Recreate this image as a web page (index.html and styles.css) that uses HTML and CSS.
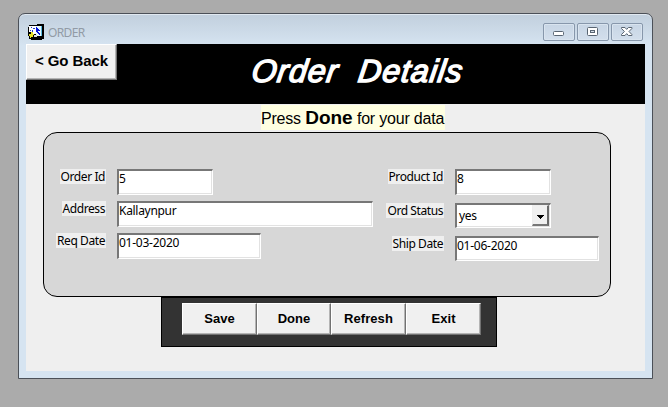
FILE: index.html
```html
<!DOCTYPE html>
<html lang="en">
<head>
<meta charset="utf-8">
<title>ORDER</title>
<link rel="stylesheet" href="styles.css">
</head>
<body>
<main class="window">
  <div class="titlebar">
    <svg class="app-icon" width="16" height="16" viewBox="0 0 16 16" shape-rendering="crispEdges">
      <path d="M1 1H9V0H16V15H14V16H3V15H1V12H0V3H1Z" fill="#000"/>
      <path d="M1 2H8V10H5V8H1Z" fill="#fff"/>
      <path d="M3 3H4V4H3ZM5 4H7V5H5ZM2 6H3V7H2ZM4 6H5V8H4Z" fill="#223bc8"/>
      <path d="M8 2H14V12H8Z" fill="#e6faff"/>
      <path d="M13 2H14V12H13Z" fill="#58b9df"/>
      <path d="M8 3H9V4H10V5H11V6H12V7H10V8H11V9H12V11H11V10H10V9H9V8H8Z" fill="#0713dd"/>
      <path d="M3 8H5V10H6V11H5V13H3V14H2V12H1V10H3Z" fill="#e8e329"/>
      <path d="M6 11H9V13H6Z" fill="#ddd"/>
    </svg>
    <span class="caption">ORDER</span>
    <div class="controls">
      <span class="control"><svg width="30" height="16" viewBox="0 0 30 16"><rect x="9.5" y="7.5" width="10" height="4" rx="1" fill="#fff" stroke="#596572"/></svg></span>
      <span class="control"><svg width="30" height="16" viewBox="0 0 30 16"><rect x="9.5" y="3.5" width="10" height="8" rx="1" fill="#fff" stroke="#596572"/><rect x="12.5" y="6.5" width="4" height="2" fill="#d5dee8" stroke="#596572"/></svg></span>
      <span class="control"><svg width="30" height="16" viewBox="0 0 30 16"><path d="M9.5 3.5H13L14.7 5.4L16.4 3.5H19.9V4.5L17 7.5L19.9 10.5V11.5H16.4L14.7 9.6L13 11.5H9.5V10.5L12.4 7.5L9.5 4.5Z" fill="#fff" stroke="#596572"/></svg></span>
    </div>
  </div>
  <div class="client">
    <header class="header">
      <button class="button back">&lt; Go Back</button>
      <h1 class="title">Order&nbsp; Details</h1>
    </header>
    <p class="notice">Press <b>Done</b> for your data</p>
    <section class="panel">
      <div class="column">
        <div class="row"><label class="label">Order Id</label><span class="field short">5</span></div>
        <div class="row"><label class="label">Address</label><span class="field long">Kallaynpur</span></div>
        <div class="row"><label class="label">Req Date</label><span class="field medium">01-03-2020</span></div>
      </div>
      <div class="column right">
        <div class="row"><label class="label">Product Id</label><span class="field short">8</span></div>
        <div class="row"><label class="label">Ord Status</label><span class="field short select"><span>yes</span><span class="drop"><svg width="7" height="4" viewBox="0 0 7 4" shape-rendering="crispEdges"><path d="M0 0H7V1H6V2H5V3H4V4H3V3H2V2H1V1H0Z"/></svg></span></span></div>
        <div class="row"><label class="label">Ship Date</label><span class="field medium">01-06-2020</span></div>
      </div>
    </section>
    <nav class="actions">
      <button class="button">Save</button>
      <button class="button">Done</button>
      <button class="button">Refresh</button>
      <button class="button">Exit</button>
    </nav>
  </div>
</main>
</body>
</html>
```
FILE: styles.css
```css
* { box-sizing: border-box; }
html, body { height: 100%; }
body {
  margin: 0;
  padding: 13px 0 0 18px;
  background: #ababab;
  overflow: hidden;
  color: #000;
  font-family: "Noto Sans", "Open Sans", sans-serif;
}
.window {
  width: 635px;
  height: 366px;
  padding: 0 7px 7px;
  border: 1px solid #4b5058;
  border-radius: 7px 7px 0 0;
  background: linear-gradient(#c1cfdd 0, #d6e4f1 32px);
  box-shadow: inset 0 1px #e1e9f1;
}
.titlebar { display: flex; height: 30px; align-items: flex-start; padding: 9px 2px 0; }
.app-icon { margin-top: 1px; }
.caption {
  margin: 2px 0 0 4px;
  color: #929ba5;
  font-size: 12px;
  line-height: 16px;
  letter-spacing: -0.65px;
}
.controls { display: flex; gap: 2px; margin-left: auto; }
.control {
  width: 32px;
  height: 18px;
  border: 1px solid #8797ab;
  border-radius: 2px;
  background: linear-gradient(#c7d5e4, #d3dfec);
  box-shadow: inset 0 0 0 1px #d9e4ef;
}
.control svg { display: block; }
.client { height: 327px; background: #efefef; }
.header { display: flex; height: 60px; background: #000; align-items: flex-start; }
.button {
  margin: 0;
  padding: 0;
  border: 1px solid;
  border-color: #fff #727272 #727272 #fff;
  border-radius: 0;
  background: #f0f0f0;
  box-shadow: inset -1px -1px #b4b4b4;
  color: #000;
  font: bold 13px/16px "Liberation Sans", Arial, sans-serif;
  letter-spacing: 0.05px;
}
.back { width: 91px; height: 36px; font-size: 15px; letter-spacing: -0.1px; padding-bottom: 2px; }
.title {
  margin: 8px 0 0 135px;
  color: #fff;
  font: italic normal 32px/38px "Liberation Sans", Arial, sans-serif;
  letter-spacing: 1px;
  white-space: nowrap;
  -webkit-text-stroke: 1.4px #fff;
  transform: skewX(-8deg);
}
.notice {
  width: 184px;
  height: 25px;
  margin: 1px 0 2px 235px;
  background: #ffffe1;
  font: 16px/27px "Liberation Sans", Arial, sans-serif;
  white-space: nowrap;
  letter-spacing: -0.2px;
}
.notice b { font-size: 19px; line-height: 20px; letter-spacing: 0; }
.panel {
  display: flex;
  width: 568px;
  height: 165px;
  margin-left: 17px;
  padding: 36px 0 0 0;
  border: 1px solid #000;
  border-radius: 14px;
  background: #d7d7d7;
}
.column { display: flex; width: 329px; flex-direction: column; gap: 6px; }
.column.right { width: 226px; gap: 8px; }
.row { display: grid; grid-template-columns: 62px 1fr; column-gap: 11px; align-items: start; }
.right .row { grid-template-columns: 71px 1fr; }
.label {
  justify-self: end;
  height: 15px;
  padding: 0 1px;
  background: #efefef;
  font-size: 12px;
  line-height: 15px;
  text-align: right;
  white-space: nowrap;
  letter-spacing: -0.42px;
}
.field {
  height: 26px;
  padding-left: 0;
  border: solid;
  border-width: 2px 1px 1px 2px;
  border-color: #777 #fff #fff #777;
  background: #fff;
  box-shadow: inset -1px -1px #e2e2e2;
  font-size: 12px;
  line-height: 15px;
  white-space: nowrap;
  letter-spacing: -0.3px;
}
.right .field { height: 25px; }
.right .row:first-child .field { height: 26px; }
.short { width: 96px; }
.medium { width: 144px; letter-spacing: -0.25px; }
.long { width: 256px; }
.select { display: flex; padding-left: 2px; line-height: 21px; justify-content: space-between; }
.drop {
  display: flex;
  width: 17px;
  height: 21px;
  margin-right: 1px;
  padding-top: 3px;
  align-items: center;
  justify-content: center;
  border: solid;
  border-width: 1px 2px 2px 1px;
  border-color: #eee #696969 #777 #eee;
  background: #f0f0f0;
}
.actions {
  display: grid;
  width: 336px;
  height: 50px;
  margin-left: 135px;
  padding: 5px 15px 0 20px;
  border: 1px solid #000;
  background: #333;
  grid-template-columns: 75px 74px 75px 75px;
  grid-template-rows: 32px;
}
```
